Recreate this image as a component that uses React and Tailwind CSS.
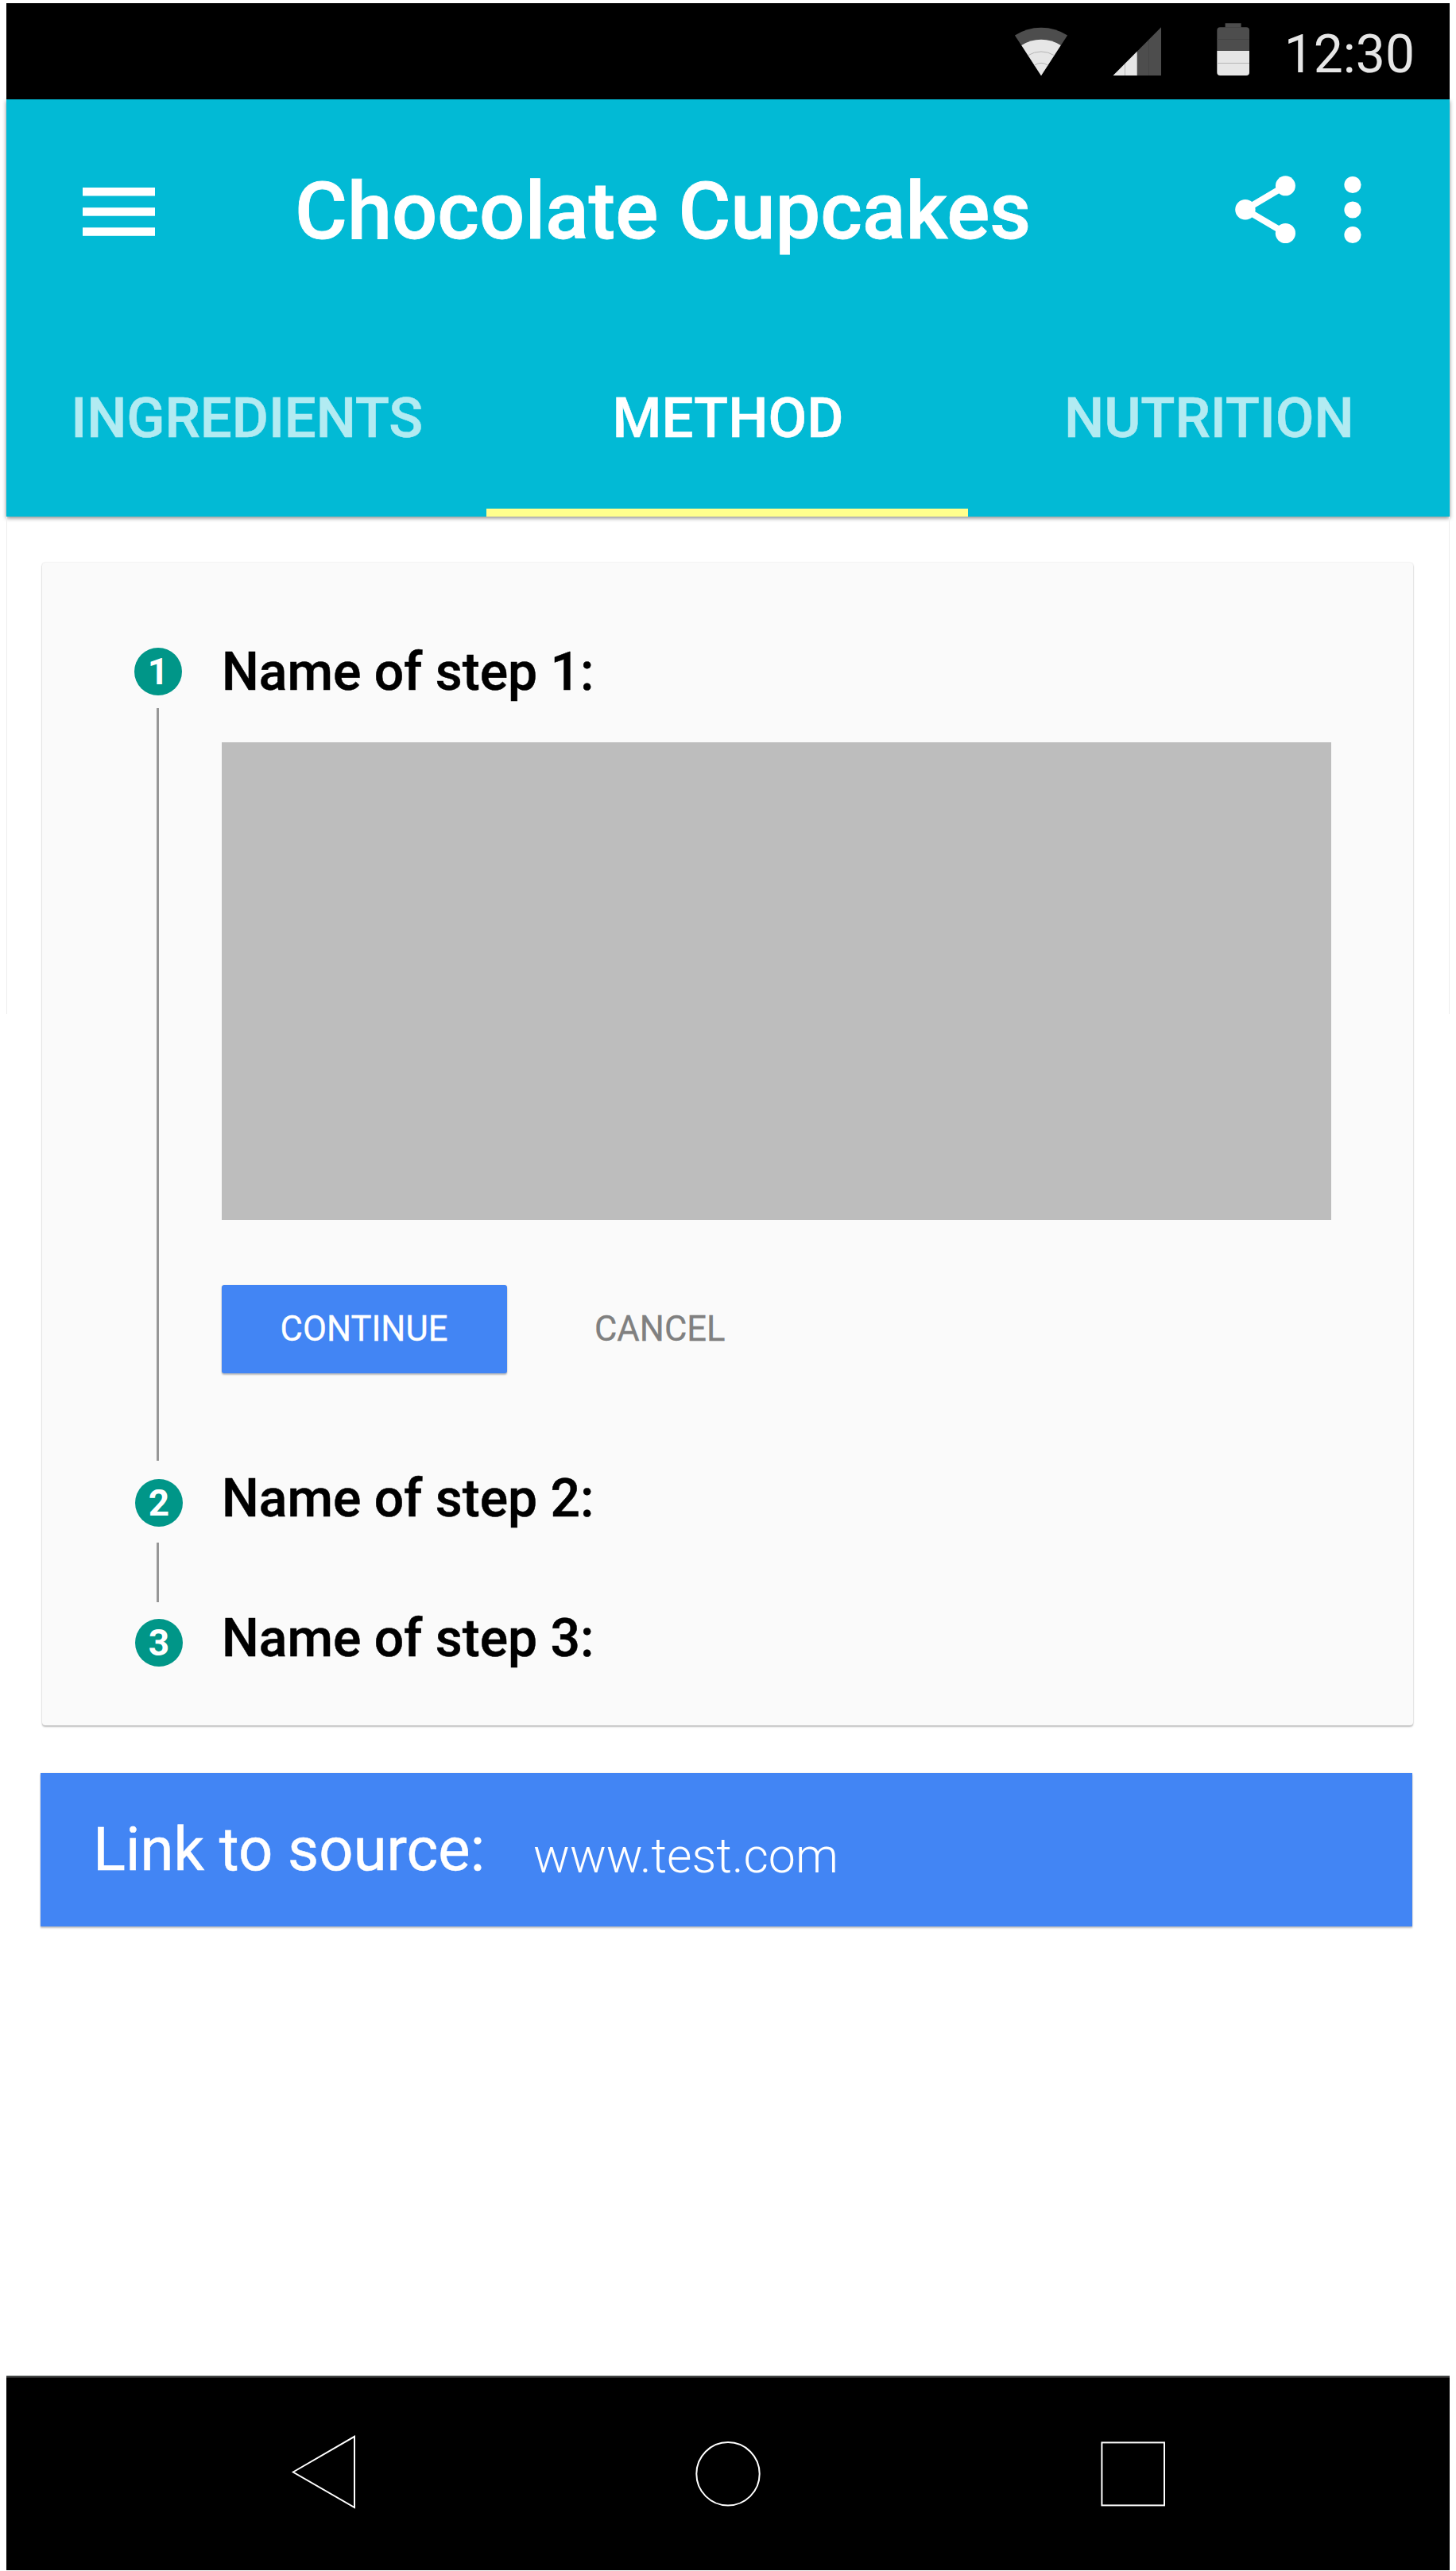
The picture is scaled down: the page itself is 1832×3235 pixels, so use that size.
const WifiIcon = () => (
  <svg className="w-[68px] h-[62px]" viewBox="1275.3 34 68 62" fill="none">
    <path d="M1309.3 95.3 L1276.2 44.4 A61 61 0 0 1 1342.4 44.4 Z" fill="#4d4d4d" />
    <path d="M1309.3 95.3 L1284.6 56.9 A45.7 45.7 0 0 1 1334 56.9 Z" fill="#e6e6e6" />
    <path d="M1292.9 69.7 A30.7 30.7 0 0 1 1325.7 69.7" stroke="#b5b5b5" strokeWidth="1" />
    <path d="M1300.9 82 A15.7 15.7 0 0 1 1317.7 82" stroke="#b5b5b5" strokeWidth="1" />
  </svg>
);

const SignalIcon = () => (
  <svg className="w-[61px] h-[62px]" viewBox="1400 34 61 62" fill="none">
    <path d="M1400.6 95 L1461 34.3 V95 Z" fill="#4d4d4d" />
    <path d="M1400.6 95 L1430.7 64.7 V95 Z" fill="#e6e6e6" />
    <path d="M1415.5 80 V95" stroke="#b5b5b5" />
    <path d="M1445.5 50 V95" stroke="#444444" />
  </svg>
);

const BatteryIcon = () => (
  <svg className="w-[42px] h-[67px]" viewBox="1531 29 42 67" fill="none">
    <path d="M1541.6 29.3 H1561.6 V34.3 H1568 A4 4 0 0 1 1572 38.3 V64 H1531.3 V38.3 A4 4 0 0 1 1535.3 34.3 H1541.6 Z" fill="#4d4d4d" />
    <path d="M1531.3 64 H1572 V91 A4 4 0 0 1 1568 95 H1535.3 A4 4 0 0 1 1531.3 91 Z" fill="#e6e6e6" />
    <path d="M1531.3 79.5 H1572" stroke="#b5b5b5" />
    <path d="M1531.3 49.5 H1572 M1541.6 34.5 H1561.6" stroke="#444444" />
  </svg>
);

const MenuIcon = () => (
  <svg className="w-[91px] h-[61px]" viewBox="0 0 91 61" fill="#ffffff">
    <rect width="91" height="10.5" />
    <rect y="25.2" width="91" height="10.5" />
    <rect y="50.3" width="91" height="10.5" />
  </svg>
);

const ShareIcon = () => (
  <svg className="w-[76px] h-[86px]" viewBox="1554 220.5 76 86" fill="#ffffff">
    <path d="M1617.4 233.3 L1566.9 263.2 L1617.4 293" fill="none" stroke="#ffffff" strokeWidth="8.2" />
    <circle cx="1566.9" cy="263.2" r="12.7" />
    <circle cx="1617.4" cy="233.3" r="12.5" />
    <circle cx="1617.4" cy="293" r="12.6" />
  </svg>
);

const MoreIcon = () => (
  <svg className="w-[22px] h-[86px]" viewBox="0 0 22 86" fill="#ffffff">
    <circle cx="11" cy="11.5" r="10.6" />
    <circle cx="11" cy="43" r="10.6" />
    <circle cx="11" cy="74.5" r="10.6" />
  </svg>
);

const StatusBar = () => (
  <div className="flex h-[121px] items-start justify-end bg-black pr-[44px] text-[#e6e6e6]">
    <div className="mt-[30px] mr-[56px]"><WifiIcon /></div>
    <div className="mt-[30px] mr-[70px]"><SignalIcon /></div>
    <div className="mt-[25px] mr-[43px]"><BatteryIcon /></div>
    <div className="mt-[5px] text-[66px] leading-[120px]">12:30</div>
  </div>
);

const TABS = [
  { label: "INGREDIENTS", active: false },
  { label: "METHOD", active: true },
  { label: "NUTRITION", active: false },
];

const Header = () => (
  <header className="h-[525px] bg-[#02bad5] text-white shadow-[0_2px_5px_rgba(0,0,0,0.45)]">
    <div className="flex h-[280px] items-center pl-24 pr-[111px]">
      <div className="mt-[3px]"><MenuIcon /></div>
      <h1 className="mt-[2px] ml-[176px] flex-1 whitespace-nowrap text-[101px] leading-[120px] font-medium [-webkit-text-stroke:0.8px]">Chocolate Cupcakes</h1>
      <div className="-mt-[3px]"><ShareIcon /></div>
      <div className="ml-[61px] -mt-[2px]"><MoreIcon /></div>
    </div>
    <nav className="flex h-[245px] text-center text-[70.8px] leading-[229px] font-medium [-webkit-text-stroke:0.5px]">
      {TABS.map((tab) => (
        <div key={tab.label} className="flex flex-1 flex-col">
          <div className={tab.active ? "pt-[6px] text-white" : "pt-[6px] tracking-[-0.1px] text-[#b2ebf2]"}>
            {tab.label}
          </div>
          {tab.active && <div className="mr-px -ml-px h-[10px] bg-[#ffff8d]" />}
        </div>
      ))}
    </nav>
  </header>
);

const StepBadge = ({ children }) => (
  <div className="flex h-[60px] w-[60px] shrink-0 items-center justify-center rounded-full bg-[#009688] text-[46px] leading-none font-bold text-white">
    {children}
  </div>
);

const CollapsedTitle = ({ children }) => (
  <h2 className="ml-[49px] text-[66px] leading-[49px] font-medium [-webkit-text-stroke:0.5px]">{children}</h2>
);

const StepsCard = () => (
  <section className="h-[1463px] rounded-[4px] bg-[#fafafa] pt-[107px] pl-[116px] pr-[103px] text-black shadow-[0_0_2px_rgba(0,0,0,0.16),0_2px_2px_rgba(0,0,0,0.24)]">
    <div className="flex h-[1046px]">
      <div className="w-[60px]">
        <StepBadge>1</StepBadge>
        <div className="mt-4 ml-7 h-[947px] w-[3px] bg-[#979797]" />
      </div>
      <div className="ml-[50px] flex-1">
        <h2 className="text-[66px] leading-[61px] font-medium [-webkit-text-stroke:0.5px]">Name of step 1:</h2>
        <div className="mt-[58px] h-[601px] bg-[#bdbdbd]" />
        <div className="mt-[82px] flex text-[43.6px] leading-[109px] [-webkit-text-stroke:0.3px]">
          <button className="h-[111px] w-[359px] rounded-[3px] bg-[#4285f4] pr-px text-white shadow-[0_2px_2px_rgba(0,0,0,0.24),0_0_2px_rgba(0,0,0,0.12)]">CONTINUE</button>
          <button className="ml-[110px] text-[#808080]">CANCEL</button>
        </div>
      </div>
    </div>
    <div className="flex h-[176px]">
      <div className="ml-px w-[60px]">
        <StepBadge>2</StepBadge>
        <div className="mt-5 ml-[27px] h-[75px] w-[3px] bg-[#979797]" />
      </div>
      <CollapsedTitle>Name of step 2:</CollapsedTitle>
    </div>
    <div className="flex">
      <div className="ml-px"><StepBadge>3</StepBadge></div>
      <CollapsedTitle>Name of step 3:</CollapsedTitle>
    </div>
  </section>
);

const NavBar = () => (
  <footer className="flex h-[244px] items-start border-t-2 border-[#2b2b2b] bg-black">
    <svg className="mt-[71px] ml-[358px] h-[96px] w-[82px]" viewBox="366 3063 82 96" fill="none" stroke="#ffffff" strokeWidth="2">
      <path d="M368.8 3110.5 L446 3065.8 V3155 Z" />
    </svg>
    <svg className="mt-[80px] ml-[427px] h-[82px] w-[82px]" viewBox="875 3071 82 82" fill="none" stroke="#ffffff" strokeWidth="2">
      <circle cx="916" cy="3111.8" r="39.7" />
    </svg>
    <svg className="mt-[80px] ml-[428px] h-[82px] w-[82px]" viewBox="1385 3072 82 82" fill="none" stroke="#ffffff" strokeWidth="2">
      <rect x="1386.4" y="3073.4" width="78.6" height="79" />
    </svg>
  </footer>
);

export default function App() {
  return (
    <div className="flex h-[3235px] w-[1832px] flex-col bg-white px-2 pt-1 font-[Roboto,sans-serif]">
      <StatusBar />
      <Header />
      <main className="flex-1">
        <div className="h-[626px] border-x border-[#eeeeee] pt-[58px] pr-[45px] pl-[44px]">
          <StepsCard />
        </div>
        <section className="mt-[955px] mr-[47px] ml-[43px] flex h-[193px] items-start bg-[#4285f4] text-white shadow-[0_2px_2px_rgba(0,0,0,0.24),0_0_2px_rgba(0,0,0,0.12)]">
          <div className="ml-[66px] text-[76px] leading-[192px] [-webkit-text-stroke:0.5px]">Link to source:</div>
          <div className="ml-[61px] text-[60.8px] leading-[210px] font-light">www.test.com</div>
        </section>
      </main>
      <div className="h-px bg-[#8e9291]" />
      <NavBar />
      <div className="h-px" />
    </div>
  );
}
